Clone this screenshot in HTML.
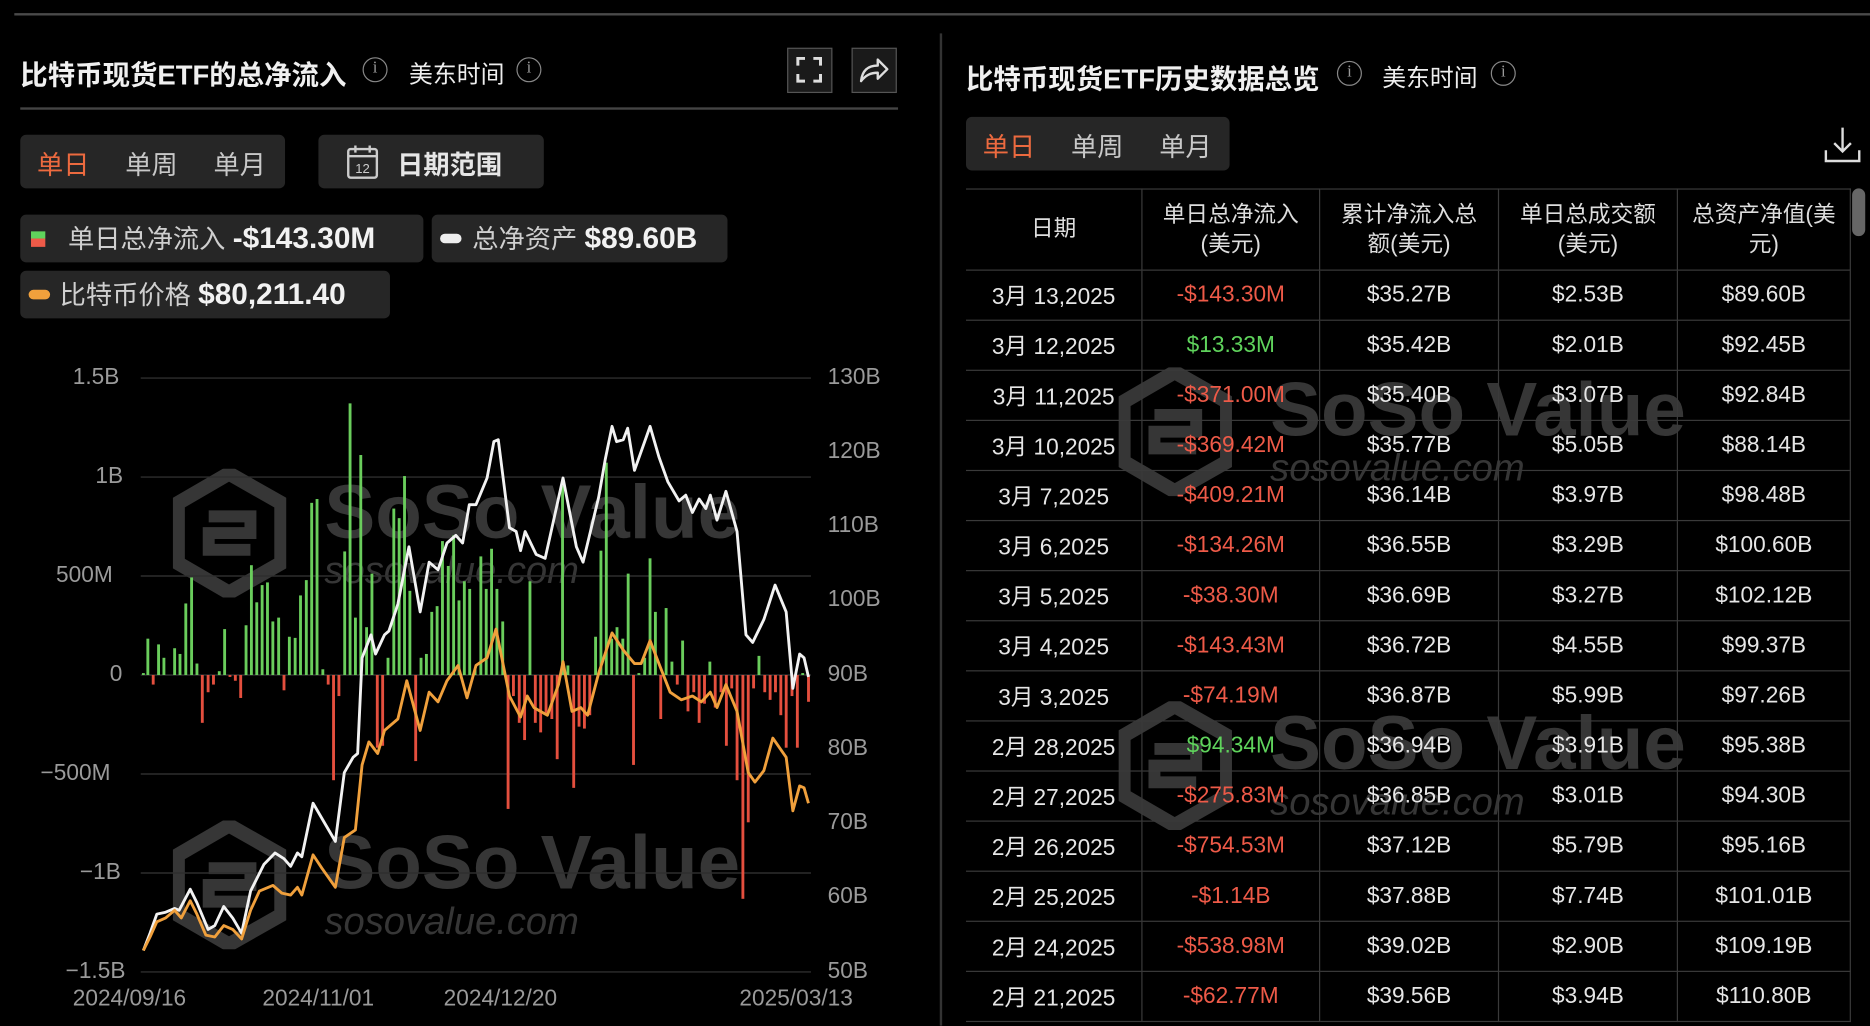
<!DOCTYPE html>
<html><head><meta charset="utf-8"><style>
html,body{margin:0;padding:0;background:#000;width:1870px;height:1026px;overflow:hidden}
#w{position:absolute;left:0;top:0;width:1568px;height:860px;transform:scale(1.19260);transform-origin:0 0;font-family:"Liberation Sans","Noto Sans CJK SC",sans-serif;color:#e8e8e8}
.a{position:absolute;white-space:nowrap}
.ttl{font-size:23px;font-weight:bold;color:#f0f0f0}
.tz{font-size:20px;color:#eee}
.info{display:inline-block;width:21px;height:21px;border:1.5px solid #888;border-radius:50%;box-sizing:border-box;text-align:center;font-size:14px;line-height:18px;color:#999;font-family:"Liberation Serif",serif}
.box{position:absolute;background:#262626;border-radius:5px}
.tab{font-size:22px;color:#c8c8c8}
.chip{position:absolute;background:#262626;border-radius:5px;height:40px;font-size:22px;line-height:40px;color:#cfcfcf;white-space:nowrap}
.chip b{color:#f2f2f2;font-weight:bold;font-size:25px}
.ax{position:absolute;font-size:19px;color:#9a9a9a}
table{position:absolute;left:810px;top:158px;border-collapse:collapse;width:742px}
td,th{border:1px solid #3a3a3a;text-align:center;font-size:19px;color:#e6e6e6;height:41px;padding:0;font-weight:normal}
th{height:67px;line-height:25px;color:#ddd}
tr td:first-child,tr th:first-child{border-left:none}
.r{color:#ee5a48}.g{color:#5fd35c}
.wm{position:absolute;color:#363636;font-weight:bold;font-size:64px;font-family:"Liberation Sans",sans-serif}
.wm2{position:absolute;color:#363636;font-style:italic;font-size:32px}
</style></head><body><div id="w">
<div class="a" style="left:12px;top:11px;width:1556px;height:2px;background:#4a4a4a"></div>
<div class="a" style="left:788px;top:28px;width:2px;height:832px;background:#333"></div>

<div class="a ttl" style="left:17px;top:44px">比特币现货ETF的总净流入</div>
<div class="a" style="left:304px;top:48px"><span class="info">i</span></div>
<div class="a tz" style="left:343px;top:46px">美东时间</div>
<div class="a" style="left:433px;top:48px"><span class="info">i</span></div>
<div class="a" style="left:660px;top:40px;width:38px;height:38px;border:1.5px solid #555;background:#1a1a1a;box-sizing:border-box">
<svg width="35" height="35" viewBox="0 0 35 35"><path d="M8 14V8h6M21 8h6v6M27 21v6h-6M14 27H8v-6" stroke="#ddd" stroke-width="2.5" fill="none"/></svg></div>
<div class="a" style="left:714px;top:40px;width:38px;height:38px;border:1.5px solid #555;background:#1a1a1a;box-sizing:border-box">
<svg width="35" height="35" viewBox="0 0 35 35"><path d="M7 27C8 18 13 14 21 14V9l8 8-8 8v-5c-6 0-10 2-14 7z" stroke="#ddd" stroke-width="2" fill="none" stroke-linejoin="round"/></svg></div>
<div class="a" style="left:17px;top:90px;width:736px;height:2px;background:#444"></div>

<div class="box" style="left:17px;top:113px;width:222px;height:45px"></div>
<div class="a tab" style="left:31px;top:121px;color:#ec6a3f">单日</div>
<div class="a tab" style="left:105px;top:121px">单周</div>
<div class="a tab" style="left:179px;top:121px">单月</div>
<div class="box" style="left:267px;top:113px;width:189px;height:45px"></div>
<svg class="a" style="left:289px;top:120px" width="30" height="32" viewBox="0 0 30 32"><rect x="3" y="5" width="24" height="24" rx="2" stroke="#ccc" stroke-width="2" fill="none"/><path d="M3 11h24M9 2v6M21 2v6" stroke="#ccc" stroke-width="2"/><text x="15" y="25" font-size="11" fill="#ccc" text-anchor="middle" font-family="Liberation Sans">12</text></svg>
<div class="a tab" style="left:333px;top:121px;color:#e6e6e6;font-weight:bold">日期范围</div>

<div class="chip" style="left:17px;top:180px;width:338px"><span style="position:absolute;left:9px;top:14px;width:12px;height:6px;background:#5fd35c"></span><span style="position:absolute;left:9px;top:20px;width:12px;height:7px;background:#ee5a48"></span><span style="position:absolute;left:40px">单日总净流入 <b>-$143.30M</b></span></div>
<div class="chip" style="left:362px;top:180px;width:248px"><span style="position:absolute;left:7px;top:16px;width:18px;height:8px;border-radius:4px;background:#eee"></span><span style="position:absolute;left:34px">总净资产 <b>$89.60B</b></span></div>
<div class="chip" style="left:17px;top:227px;width:310px"><span style="position:absolute;left:7px;top:16px;width:18px;height:8px;border-radius:4px;background:#f0a03c"></span><span style="position:absolute;left:33px">比特币价格 <b>$80,211.40</b></span></div>

<div class="ax" style="left:61px;top:306px">1.5B</div>
<div class="ax" style="left:80px;top:389px">1B</div>
<div class="ax" style="left:47px;top:472px">500M</div>
<div class="ax" style="left:92px;top:555px">0</div>
<div class="ax" style="left:34px;top:638px">−500M</div>
<div class="ax" style="left:67px;top:721px">−1B</div>
<div class="ax" style="left:55px;top:804px">−1.5B</div>
<div class="ax" style="left:694px;top:306px">130B</div>
<div class="ax" style="left:694px;top:368px">120B</div>
<div class="ax" style="left:694px;top:430px">110B</div>
<div class="ax" style="left:694px;top:492px">100B</div>
<div class="ax" style="left:694px;top:555px">90B</div>
<div class="ax" style="left:694px;top:617px">80B</div>
<div class="ax" style="left:694px;top:679px">70B</div>
<div class="ax" style="left:694px;top:741px">60B</div>
<div class="ax" style="left:694px;top:804px">50B</div>
<div class="ax" style="left:61px;top:827px">2024/09/16</div>
<div class="ax" style="left:220px;top:827px">2024/11/01</div>
<div class="ax" style="left:372px;top:827px">2024/12/20</div>
<div class="ax" style="left:620px;top:827px">2025/03/13</div>

<svg class="a" style="left:145px;top:393px" width="95" height="108" viewBox="0 0 95 108"><path d="M47 4L91 29V79L47 104L4 79V29Z" fill="none" stroke="#363636" stroke-width="12"/><path d="M30 40h35v14H30v14h35" fill="none" stroke="#363636" stroke-width="10"/></svg>
<div class="wm" style="left:272px;top:392px">SoSo Value</div>
<div class="wm2" style="left:272px;top:460px">sosovalue.com</div>
<svg class="a" style="left:145px;top:688px" width="95" height="108" viewBox="0 0 95 108"><path d="M47 4L91 29V79L47 104L4 79V29Z" fill="none" stroke="#363636" stroke-width="12"/><path d="M30 40h35v14H30v14h35" fill="none" stroke="#363636" stroke-width="10"/></svg>
<div class="wm" style="left:272px;top:686px">SoSo Value</div>
<div class="wm2" style="left:272px;top:754px">sosovalue.com</div>

<svg id="ch" class="a" style="left:0;top:0" width="790" height="860"></svg>

<div class="a ttl" style="left:810px;top:47px">比特币现货ETF历史数据总览</div>
<div class="a" style="left:1121px;top:51px"><span class="info">i</span></div>
<div class="a tz" style="left:1159px;top:49px">美东时间</div>
<div class="a" style="left:1250px;top:51px"><span class="info">i</span></div>
<div class="box" style="left:810px;top:98px;width:221px;height:45px"></div>
<div class="a tab" style="left:824px;top:106px;color:#ec6a3f">单日</div>
<div class="a tab" style="left:898px;top:106px">单周</div>
<div class="a tab" style="left:972px;top:106px">单月</div>
<svg class="a" style="left:1528px;top:104px" width="34" height="34" viewBox="0 0 34 34"><path d="M17 3v20M10 16l7 7 7-7M3 22v9h28v-9" stroke="#ddd" stroke-width="2" fill="none"/></svg>
<div class="a" style="left:1553px;top:158px;width:11px;height:40px;border-radius:6px;background:#666"></div>

<svg class="a" style="left:938px;top:308px" width="95" height="108" viewBox="0 0 95 108"><path d="M47 4L91 29V79L47 104L4 79V29Z" fill="none" stroke="#363636" stroke-width="12"/><path d="M30 40h35v14H30v14h35" fill="none" stroke="#363636" stroke-width="10"/></svg>
<div class="wm" style="left:1065px;top:306px">SoSo Value</div>
<div class="wm2" style="left:1065px;top:374px">sosovalue.com</div>
<svg class="a" style="left:938px;top:588px" width="95" height="108" viewBox="0 0 95 108"><path d="M47 4L91 29V79L47 104L4 79V29Z" fill="none" stroke="#363636" stroke-width="12"/><path d="M30 40h35v14H30v14h35" fill="none" stroke="#363636" stroke-width="10"/></svg>
<div class="wm" style="left:1065px;top:586px">SoSo Value</div>
<div class="wm2" style="left:1065px;top:654px">sosovalue.com</div>

<table>
<tr><th style="width:147px">日期</th><th style="width:148px">单日总净流入<br>(美元)</th><th style="width:149px">累计净流入总<br>额(美元)</th><th style="width:149px">单日总成交额<br>(美元)</th><th>总资产净值(美<br>元)</th></tr>
<tr><td>3月 13,2025</td><td class="r">-$143.30M</td><td>$35.27B</td><td>$2.53B</td><td>$89.60B</td></tr>
<tr><td>3月 12,2025</td><td class="g">$13.33M</td><td>$35.42B</td><td>$2.01B</td><td>$92.45B</td></tr>
<tr><td>3月 11,2025</td><td class="r">-$371.00M</td><td>$35.40B</td><td>$3.07B</td><td>$92.84B</td></tr>
<tr><td>3月 10,2025</td><td class="r">-$369.42M</td><td>$35.77B</td><td>$5.05B</td><td>$88.14B</td></tr>
<tr><td>3月 7,2025</td><td class="r">-$409.21M</td><td>$36.14B</td><td>$3.97B</td><td>$98.48B</td></tr>
<tr><td>3月 6,2025</td><td class="r">-$134.26M</td><td>$36.55B</td><td>$3.29B</td><td>$100.60B</td></tr>
<tr><td>3月 5,2025</td><td class="r">-$38.30M</td><td>$36.69B</td><td>$3.27B</td><td>$102.12B</td></tr>
<tr><td>3月 4,2025</td><td class="r">-$143.43M</td><td>$36.72B</td><td>$4.55B</td><td>$99.37B</td></tr>
<tr><td>3月 3,2025</td><td class="r">-$74.19M</td><td>$36.87B</td><td>$5.99B</td><td>$97.26B</td></tr>
<tr><td>2月 28,2025</td><td class="g">$94.34M</td><td>$36.94B</td><td>$3.91B</td><td>$95.38B</td></tr>
<tr><td>2月 27,2025</td><td class="r">-$275.83M</td><td>$36.85B</td><td>$3.01B</td><td>$94.30B</td></tr>
<tr><td>2月 26,2025</td><td class="r">-$754.53M</td><td>$37.12B</td><td>$5.79B</td><td>$95.16B</td></tr>
<tr><td>2月 25,2025</td><td class="r">-$1.14B</td><td>$37.88B</td><td>$7.74B</td><td>$101.01B</td></tr>
<tr><td>2月 24,2025</td><td class="r">-$538.98M</td><td>$39.02B</td><td>$2.90B</td><td>$109.19B</td></tr>
<tr><td>2月 21,2025</td><td class="r">-$62.77M</td><td>$39.56B</td><td>$3.94B</td><td>$110.80B</td></tr>
</table>
</div>
<script>
var s=document.getElementById('ch'),h='';
function X(z){return 109+z*0.3743}function Y(z){return 327+z*0.3208}
[317,400,483,566,649,732,815].forEach(function(y){h+='<line x1="118" x2="680" y1="'+y+'" y2="'+y+'" stroke="#2e2e2e" stroke-width="1.2"/>';});
var b=[30,740,40,650,52,770,64,665,76,700,100,675,112,690,125,558,138,490,150,715,162,870,175,790,187,770,200,735,212,625,224,750,236,760,248,805,260,615,272,458,284,555,296,510,308,503,320,605,333,595,345,785,357,645,370,648,382,537,395,497,407,295,419,285,432,730,444,770,456,1020,468,800,481,422,493,35,505,595,517,170,530,620,542,480,554,935,566,930,578,700,591,310,603,335,615,225,627,525,640,970,652,700,664,690,676,580,688,565,700,395,713,460,725,380,737,550,749,500,761,520,773,730,786,435,798,520,810,415,822,520,835,605,847,1095,859,800,872,870,884,915,896,500,908,870,920,895,932,850,945,860,957,965,969,250,981,720,994,1040,1006,880,1018,885,1030,850,1043,645,1055,420,1067,190,1079,650,1091,620,1104,650,1116,480,1128,980,1140,740,1153,700,1165,440,1177,580,1189,860,1201,570,1214,710,1226,770,1238,655,1250,840,1263,790,1275,870,1287,820,1299,710,1311,830,1324,790,1336,930,1348,780,1360,1020,1373,1330,1385,1130,1397,780,1409,695,1422,790,1434,810,1446,790,1458,850,1470,935,1483,800,1495,935,1507,740,1520,815];
for(var i=0;i<b.length;i+=2){var x=X(b[i]),t=Y(b[i+1]),z=566,c=t<z?'#6acd5c':'#e44f3e';h+='<rect x="'+(x-1.2)+'" y="'+Math.min(t,z)+'" width="2.4" height="'+Math.abs(z-t)+'" fill="'+c+'"/>';}
function L(a,c){var p=[];for(var i=0;i<a.length;i+=2)p.push(X(a[i]).toFixed(1)+','+Y(a[i+1]).toFixed(1));h+='<polyline points="'+p.join(' ')+'" fill="none" stroke="'+c+'" stroke-width="2.4" stroke-linejoin="round"/>';}
L([30,1465,45,1420,60,1370,80,1365,100,1355,110,1360,135,1305,150,1340,175,1410,190,1400,210,1350,230,1380,250,1420,270,1310,300,1240,325,1210,345,1225,360,1245,375,1210,385,1220,410,1080,440,1140,460,1180,480,1000,500,960,510,950,520,700,540,640,550,690,570,640,580,630,600,560,625,410,650,580,670,450,690,470,710,400,730,380,745,400,760,300,775,300,800,230,815,135,825,130,850,360,865,370,875,420,885,370,910,430,930,440,970,230,1000,410,1015,450,1050,280,1065,180,1080,95,1090,135,1105,130,1115,100,1130,210,1165,95,1185,175,1205,240,1230,290,1245,275,1260,320,1275,285,1290,310,1300,275,1315,340,1335,265,1360,370,1380,640,1395,660,1420,600,1445,510,1470,580,1485,780,1500,690,1510,700,1520,750],'#f2f2f2');
L([30,1465,45,1430,60,1390,80,1380,100,1360,115,1380,135,1335,150,1370,170,1425,190,1430,210,1400,230,1410,250,1435,270,1360,290,1310,320,1295,340,1315,360,1320,375,1300,385,1320,410,1215,430,1250,460,1300,480,1170,505,1150,520,980,535,920,555,950,570,890,600,860,620,760,650,890,670,790,690,815,710,760,735,720,755,805,775,720,800,700,820,625,850,800,875,855,890,800,905,830,935,850,960,770,970,710,990,840,1010,830,1025,850,1050,740,1080,635,1105,680,1130,715,1145,715,1165,655,1185,715,1210,790,1235,810,1260,800,1280,815,1300,790,1315,830,1335,770,1360,840,1385,1000,1400,1025,1420,995,1440,910,1470,960,1485,1100,1500,1035,1510,1040,1520,1080],'#f0a03c');
s.innerHTML=h;
</script>
</body></html>
